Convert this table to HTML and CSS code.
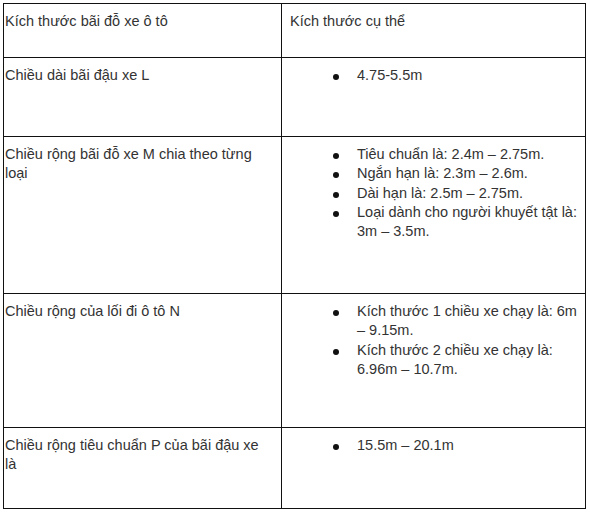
FILE: index.html
```html
<!DOCTYPE html>
<html lang="vi">
<head>
<meta charset="utf-8">
<link rel="stylesheet" href="styles.css">
</head>
<body>
<div class="page">
<table class="spec">
  <colgroup><col class="col-name"><col class="col-val"></colgroup>
  <tr class="row-head">
    <td class="c-name">Kích thước bãi đỗ xe ô tô</td>
    <td class="c-val">Kích thước cụ thể</td>
  </tr>
  <tr class="row-1">
    <td class="c-name">Chiều dài bãi đậu xe L</td>
    <td class="c-val"><ul class="bul"><li>4.75-5.5m</li></ul></td>
  </tr>
  <tr class="row-2">
    <td class="c-name">Chiều rộng bãi đỗ xe M chia theo từng loại</td>
    <td class="c-val"><ul class="bul">
      <li>Tiêu chuẩn là: 2.4m – 2.75m.</li>
      <li>Ngắn hạn là: 2.3m – 2.6m.</li>
      <li>Dài hạn là: 2.5m – 2.75m.</li>
      <li>Loại dành cho người khuyết tật là: 3m – 3.5m.</li>
    </ul></td>
  </tr>
  <tr class="row-3">
    <td class="c-name">Chiều rộng của lối đi ô tô N</td>
    <td class="c-val"><ul class="bul">
      <li>Kích thước 1 chiều xe chạy là: 6m – 9.15m.</li>
      <li>Kích thước 2 chiều xe chạy là: 6.96m – 10.7m.</li>
    </ul></td>
  </tr>
  <tr class="row-4">
    <td class="c-name">Chiều rộng tiêu chuẩn P của bãi đậu xe là</td>
    <td class="c-val"><ul class="bul"><li>15.5m – 20.1m</li></ul></td>
  </tr>
</table>
</div>
</body>
</html>
```
FILE: styles.css
```css
html, body {
  margin: 0;
  padding: 0;
  background: #ffffff;
}
.page {
  padding: 3px 0 0 3px;
}
.spec {
  border-collapse: collapse;
  table-layout: fixed;
  width: 583px;
  font-family: "Liberation Sans", Arial, sans-serif;
  font-size: 14.5px;
  line-height: 19.3px;
  color: #333333;
}
.col-name { width: 278px; }
.spec td {
  border: 1px solid #111;
  vertical-align: top;
  padding: 8px 12px 0 1px;
}
.spec td.c-val {
  padding-left: 8px;
  padding-right: 1px;
}
.row-head td { height: 45px; }
.row-1 td { height: 70px; }
.row-2 td { height: 148px; }
.row-3 td { height: 125px; }
.row-4 td { height: 72px; }
.bul {
  list-style: none;
  margin: 0;
  padding: 0;
}
.bul li {
  position: relative;
  padding-left: 67px;
}
.bul li::before {
  content: "";
  position: absolute;
  left: 43px;
  top: 8px;
  width: 6px;
  height: 6px;
  border-radius: 50%;
  background: #111;
}
```
